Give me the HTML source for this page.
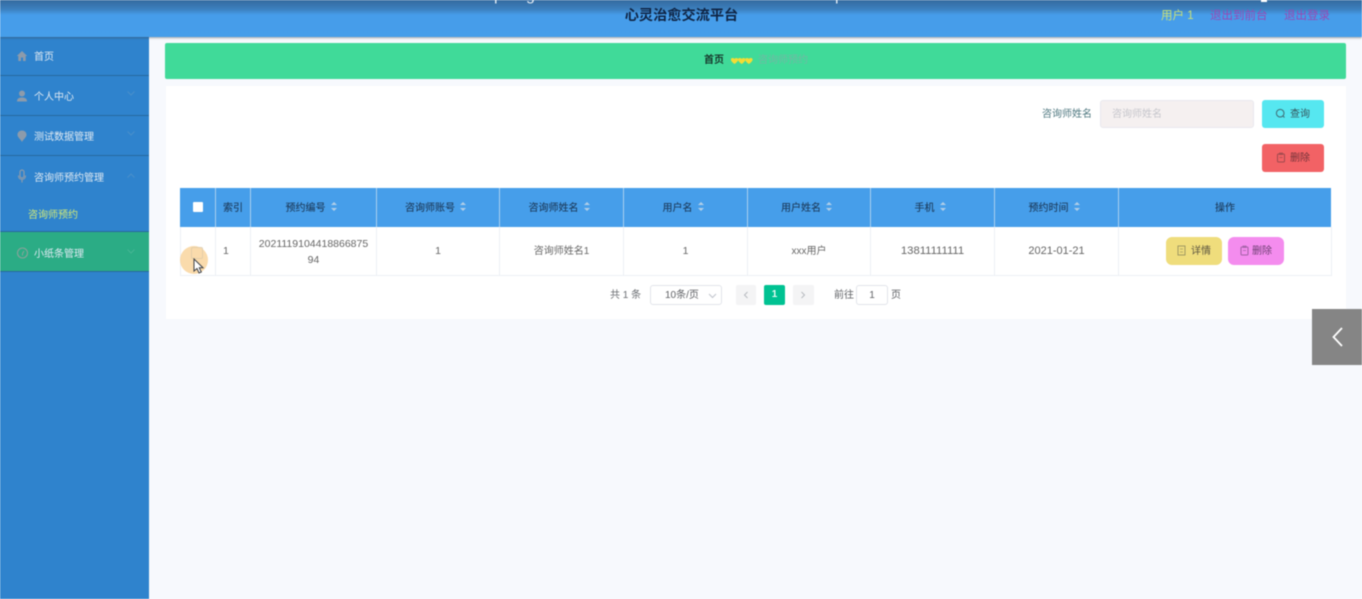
<!DOCTYPE html>
<html lang="zh">
<head>
<meta charset="utf-8">
<title>心灵治愈交流平台</title>
<style>
*{box-sizing:border-box;margin:0;padding:0}
html,body{width:1362px;height:599px;overflow:hidden;background:#f7f9fd;font-family:"Liberation Sans","Noto Sans CJK SC",sans-serif}
#root{position:absolute;left:0;top:0;width:1362px;height:599px;overflow:hidden;filter:blur(.45px)}
.a{position:absolute;white-space:nowrap}
.t{position:absolute;white-space:nowrap;text-align:center;transform:translateX(-50%)}
.side{position:absolute;left:0;top:37px;width:148.500px;height:562px;background:#2f83cd}
.mi{position:absolute;left:0;width:148.500px;height:40px;border-bottom:1px solid #27699f}
.mi span{position:absolute;left:34px;top:15px;font-size:10px;line-height:14px;color:#dfe9f2}
.mi svg{position:absolute}
.hc{position:absolute;top:188px;height:39px;background:#469eea;border-right:1px solid #a9cfef;font-size:10px;line-height:41px;color:#1f4266;text-align:center;font-weight:500}
.hs{padding-right:4px}
.dc{position:absolute;top:227px;height:49px;background:#fff;border-right:1px solid #edf0f5;border-bottom:1px solid #edf0f5;font-size:10.5px;color:#666;text-align:center;line-height:48px}
.z{line-height:50px}
.s{display:inline-block;position:relative;width:7px;height:9px;margin-left:5px;vertical-align:0}
.s:before,.s:after{content:"";position:absolute;left:0;border-left:3.500px solid transparent;border-right:3.500px solid transparent}
.s:before{top:0;border-bottom:3.800px solid #b2cfe8}
.s:after{bottom:0;border-top:3.800px solid #b2cfe8}
.chev{position:absolute;left:127px;top:15px;width:8px;height:5px}
</style>
</head>
<body>
<div id="root">
  <!-- Header -->
  <div class="a" style="left:0;top:0;width:1362px;height:37px;background:linear-gradient(#346a9f 0,#3c7fbd 9px,#469dea 15px,#469eea 37px);box-shadow:0 1px 2px rgba(60,60,60,.45);z-index:2;overflow:hidden">
    <div class="a" style="left:494px;top:-13px;font-size:16px;line-height:18px;color:#e6eef5">p</div>
    <div class="a" style="left:526px;top:-13px;font-size:16px;line-height:18px;color:#e6eef5">g</div>
    <div class="a" style="left:835px;top:-13px;font-size:16px;line-height:18px;color:#e6eef5">p</div>
    <div class="a" style="left:1261px;top:0;width:6px;height:2px;background:#fff"></div>
    <div class="t" style="left:681.500px;top:6px;font-size:14.200px;line-height:20px;font-weight:700;color:#0f2444">心灵治愈交流平台</div>
    <div class="a" style="left:1161px;top:7.500px;font-size:11.500px;line-height:16px;color:#c8e07a">用户 1</div>
    <div class="a" style="left:1210px;top:7.500px;font-size:11.500px;line-height:16px;color:#9a48b4">退出到前台</div>
    <div class="a" style="left:1284px;top:7.500px;font-size:11.500px;line-height:16px;color:#9a48b4">退出登录</div>
  </div>

  <!-- Sidebar -->
  <div class="side"></div>
  <div class="mi" style="top:36px"><svg style="left:16px;top:13px" width="12" height="14" viewBox="0 0 12 14"><path d="M6 2 .8 7H2.300V12H5V8.500H7V12H9.700V7H11.200Z" fill="#8d9bab"/></svg><span>首页</span></div>
  <div class="mi" style="top:76px"><svg style="left:16px;top:13px" width="12" height="14" viewBox="0 0 12 14"><circle cx="6" cy="4.500" r="3" fill="#8d9bab"/><path d="M1 12.500C1 9.500 3 8.500 6 8.500S11 9.500 11 12.500Z" fill="#8d9bab"/></svg><span>个人中心</span><svg class="chev" viewBox="0 0 8 5"><path d="M.5.500 4 4 7.500.500" fill="none" stroke="#4a8fcb"/></svg></div>
  <div class="mi" style="top:116px"><svg style="left:16px;top:13px" width="12" height="14" viewBox="0 0 12 14"><path d="M6 1.500C2.800 1.500 1.500 3.800 1.500 5.800 1.500 8.500 4.500 10 6 13 7.500 10 10.500 8.500 10.500 5.800 10.500 3.800 9.200 1.500 6 1.500Z" fill="#8d9bab"/></svg><span>测试数据管理</span><svg class="chev" viewBox="0 0 8 5"><path d="M.5.500 4 4 7.500.500" fill="none" stroke="#4a8fcb"/></svg></div>
  <div class="a" style="left:0;top:156px;width:148.500px;height:76px;border-bottom:1px solid #27699f">
    <svg class="a" style="left:16px;top:13px" width="12" height="15" viewBox="0 0 12 15"><rect x="4" y="1" width="4" height="8" rx="2" fill="none" stroke="#8d9bab" stroke-width="1.200"/><path d="M2.500 6.500C2.500 9 4 10.500 6 10.500S9.500 9 9.500 6.500M6 10.500V13.500" fill="none" stroke="#8d9bab" stroke-width="1.100"/></svg>
    <div class="a" style="left:34px;top:15.500px;font-size:10px;line-height:14px;color:#dfe9f2">咨询师预约管理</div>
    <svg class="chev" viewBox="0 0 8 5" style="top:17px"><path d="M.5 4.500 4 1 7.500 4.500" fill="none" stroke="#4a8fcb"/></svg>
    <div class="a" style="left:28px;top:52.500px;font-size:10px;line-height:14px;color:#d2ea78">咨询师预约</div>
  </div>
  <div class="mi" style="top:232px;background:#2bac85;height:40px"><svg style="left:16px;top:14px" width="13" height="14" viewBox="0 0 13 14"><circle cx="6.500" cy="7" r="5" fill="none" stroke="#8aa39b" stroke-width="1.100"/><path d="M6.500 9.500V7.500L8 5" fill="none" stroke="#8aa39b"/></svg><span style="top:15.500px">小纸条管理</span><svg class="chev" viewBox="0 0 8 5" style="top:17px"><path d="M.5.500 4 4 7.500.500" fill="none" stroke="#46b593"/></svg></div>

  <!-- Breadcrumb -->
  <div class="a" style="left:165px;top:43px;width:1181px;height:36px;background:#40da99;border-radius:2px"></div>
  <div class="a" style="left:704px;top:54px;font-size:10px;line-height:14px;font-weight:700;color:#17382c">首页</div>
  <svg class="a" style="left:730.500px;top:57.500px" width="22" height="7" viewBox="0 0 22 7"><g fill="#f4dc34"><path d="M-.2 1.500C-.2 .3 1 0 1.800 0 2.600 0 3.300.4 3.500 1 3.700.4 4.400 0 5.200 0 6 0 7.200 .3 7.200 1.500 7.200 3.200 5 5 3.500 6 2 5-.2 3.200-.2 1.500Z"/><path transform="translate(7.200 0)" d="M-.2 1.500C-.2 .3 1 0 1.800 0 2.600 0 3.300.4 3.500 1 3.700.4 4.400 0 5.200 0 6 0 7.200 .3 7.200 1.500 7.200 3.200 5 5 3.500 6 2 5-.2 3.200-.2 1.500Z"/><path transform="translate(14.400 0)" d="M-.2 1.500C-.2 .3 1 0 1.800 0 2.600 0 3.300.4 3.500 1 3.700.4 4.400 0 5.200 0 6 0 7.200 .3 7.200 1.500 7.200 3.200 5 5 3.500 6 2 5-.2 3.200-.2 1.500Z"/></g></svg>
  <div class="a" style="left:758px;top:54px;font-size:10px;line-height:14px;color:#72b8a4">咨询师预约</div>

  <!-- Card -->
  <div class="a" style="left:166px;top:86px;width:1180px;height:233px;background:#fff"></div>
  <div class="a" style="left:1042px;top:108px;font-size:10px;line-height:14px;color:#4f7880">咨询师姓名</div>
  <div class="a" style="left:1100px;top:100px;width:154px;height:28px;background:#f5f0f0;border:1px solid #e9e8ee;border-radius:3px;font-size:10px;line-height:28px;padding-left:11px;color:#c6c6cc">咨询师姓名</div>
  <div class="a" style="left:1262px;top:100px;width:62px;height:28px;background:#56e7f0;border-radius:3px;font-size:10px;line-height:30px;color:#35565e;padding-left:28px">查询</div>
  <svg class="a" style="left:1275px;top:108px" width="11" height="11" viewBox="0 0 11 11"><circle cx="5.200" cy="5.200" r="3.800" fill="none" stroke="#3f6a72"/><path d="M8 8 9.500 9.500" stroke="#3f6a72"/></svg>
  <div class="a" style="left:1262px;top:144px;width:62px;height:28px;background:#f26265;border-radius:3px;font-size:10px;line-height:30px;color:#74343a;padding-left:28px">删除</div>
  <svg class="a" style="left:1276px;top:152px" width="10" height="11" viewBox="0 0 10 11"><rect x="1.500" y="2" width="7" height="8" rx="1" fill="none" stroke="#a04a4e"/><path d="M3.500 1H6.500V2.500H3.500ZM3.500 5.500H6.500" fill="none" stroke="#a04a4e" stroke-width=".8"/></svg>

  <!-- Table -->
  <div class="hc" style="left:180px;width:36px"></div>
  <div class="a" style="left:193px;top:202px;width:10px;height:10px;background:#fff;border-radius:1px"></div>
  <div class="hc" style="left:216px;width:35px">索引</div>
  <div class="hc hs" style="left:251px;width:126px">预约编号<i class="s"></i></div>
  <div class="hc hs" style="left:377px;width:123px">咨询师账号<i class="s"></i></div>
  <div class="hc hs" style="left:500px;width:124px">咨询师姓名<i class="s"></i></div>
  <div class="hc hs" style="left:624px;width:124px">用户名<i class="s"></i></div>
  <div class="hc hs" style="left:748px;width:123px">用户姓名<i class="s"></i></div>
  <div class="hc hs" style="left:871px;width:124px">手机<i class="s"></i></div>
  <div class="hc hs" style="left:995px;width:124px">预约时间<i class="s"></i></div>
  <div class="hc" style="left:1119px;width:212px;border-right:0">操作</div>

  <div class="dc" style="left:180px;width:36px;border-left:1px solid #edf0f5"></div>
  <div class="dc" style="left:216px;width:35px;text-align:left;padding-left:7px">1</div>
  <div class="dc" style="left:251px;width:126px;line-height:16px;padding-top:9px">2021119104418866875<br>94</div>
  <div class="dc" style="left:377px;width:123px">1</div>
  <div class="dc z" style="left:500px;width:124px;font-size:10px">咨询师姓名1</div>
  <div class="dc" style="left:624px;width:124px">1</div>
  <div class="dc z" style="left:748px;width:123px;font-size:10px">xxx用户</div>
  <div class="dc" style="left:871px;width:124px;font-size:11.300px">13811111111</div>
  <div class="dc" style="left:995px;width:124px;font-size:11px">2021-01-21</div>
  <div class="dc" style="left:1119px;width:213px"></div>

  <div class="a" style="left:1166px;top:237px;width:56px;height:28px;background:#efdd7c;border-radius:6px;font-size:10px;line-height:29px;color:#5c5540;padding-left:25px">详情</div>
  <svg class="a" style="left:1177px;top:245px" width="9" height="11" viewBox="0 0 9 11"><rect x="1" y="1" width="7" height="9" fill="none" stroke="#a19a62"/><path d="M3 4H6M3 7H6" stroke="#a19a62" stroke-width=".8"/></svg>
  <div class="a" style="left:1228px;top:237px;width:56px;height:28px;background:#f48cee;border-radius:6px;font-size:10px;line-height:29px;color:#6d3f72;padding-left:24px">删除</div>
  <svg class="a" style="left:1240px;top:245px" width="9" height="11" viewBox="0 0 9 11"><rect x="1" y="2" width="7" height="8" rx="1" fill="none" stroke="#a062a5"/><path d="M3 1H6V2.500H3ZM3 5.500H6" fill="none" stroke="#a062a5" stroke-width=".8"/></svg>

  <!-- Cursor highlight -->
  <div class="a" style="left:191px;top:247px;width:12px;height:12px;border:1px solid #dcdfe6;border-radius:2px;background:#fff"></div>
  <div class="a" style="left:180px;top:246px;width:28px;height:28px;border-radius:50%;background:rgba(248,205,140,.72)"></div>
  <div class="a" style="left:191px;top:247px;width:12px;height:12px;border:1px solid rgba(225,205,170,.8);border-radius:2px"></div>
  <svg class="a" style="left:192px;top:258px" width="13" height="17" viewBox="0 0 13 17"><path d="M2 1V13L5 10.500 7 15 9.300 14 7.300 9.800H11Z" fill="#fff" stroke="#3e4146" stroke-width="1"/></svg>

  <!-- Pagination -->
  <div class="a" style="left:610px;top:289px;font-size:10px;line-height:14px;color:#6a6d72">共 1 条</div>
  <div class="a" style="left:650px;top:285px;width:72px;height:20px;border:1px solid #e2e4ea;border-radius:3px;font-size:10px;line-height:20px;padding-left:14px;color:#606266">10条/页</div>
  <svg class="a" style="left:708px;top:293px" width="9" height="6" viewBox="0 0 9 6"><path d="M1 1 4.500 4.500 8 1" fill="none" stroke="#c0c4cc"/></svg>
  <div class="a" style="left:736px;top:285px;width:20px;height:20px;background:#f4f4f5;border-radius:2px"></div>
  <svg class="a" style="left:743px;top:291px" width="6" height="8" viewBox="0 0 6 8"><path d="M4.500 1 1.500 4 4.500 7" fill="none" stroke="#b6b9bf"/></svg>
  <div class="a" style="left:764px;top:285px;width:21px;height:20px;background:#00c292;border-radius:2px;font-size:10px;font-weight:700;line-height:20px;text-align:center;color:#e9fbf5">1</div>
  <div class="a" style="left:793px;top:285px;width:21px;height:20px;background:#f4f4f5;border-radius:2px"></div>
  <svg class="a" style="left:800px;top:291px" width="6" height="8" viewBox="0 0 6 8"><path d="M1.500 1 4.500 4 1.500 7" fill="none" stroke="#b6b9bf"/></svg>
  <div class="a" style="left:834px;top:289px;font-size:10px;line-height:14px;color:#606266">前往</div>
  <div class="a" style="left:856px;top:285px;width:32px;height:20px;border:1px solid #e2e4ea;border-radius:3px;background:#fff;font-size:10px;line-height:19px;text-align:center;color:#606266">1</div>
  <div class="a" style="left:891px;top:289px;font-size:10px;line-height:14px;color:#606266">页</div>

  <!-- Right tab -->
  <div class="a" style="left:1312px;top:309px;width:50px;height:56px;background:#858585"></div>
  <svg class="a" style="left:1330px;top:326px" width="16" height="22" viewBox="0 0 16 22"><path d="M12 2 3.500 11 12 20" fill="none" stroke="#fff" stroke-width="1.800"/></svg>
</div>
</body>
</html>
